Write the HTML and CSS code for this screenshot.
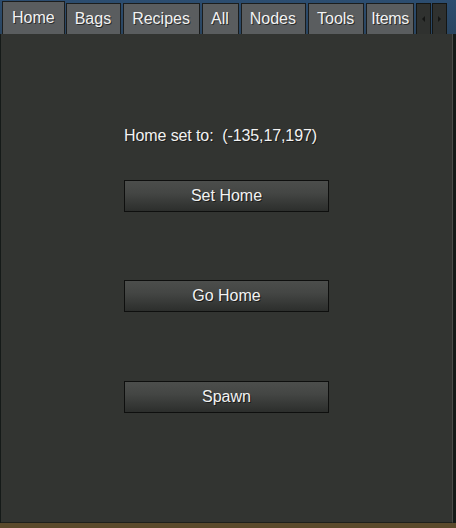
FILE: index.html
```html
<!DOCTYPE html>
<html>
<head>
<meta charset="utf-8">
<link rel="stylesheet" href="styles.css">
</head>
<body>
<div class="scene">
  <div class="tabs">
    <div class="tab active">Home</div>
    <div class="tab">Bags</div>
    <div class="tab">Recipes</div>
    <div class="tab">All</div>
    <div class="tab">Nodes</div>
    <div class="tab">Tools</div>
    <div class="tab last">Items</div>
    <div class="arrow first"><span class="tri left"></span></div>
    <div class="arrow"><span class="tri right"></span></div>
  </div>
  <div class="panel">
    <div class="label">Home set to:&nbsp; (-135,17,197)</div>
    <div class="btn b1">Set Home</div>
    <div class="btn b2">Go Home</div>
    <div class="btn b3">Spawn</div>
  </div>
  <div class="ground"></div>
</div>
</body>
</html>
```
FILE: styles.css
```css
html, body {
  margin: 0;
  padding: 0;
}
body {
  width: 456px;
  height: 528px;
  overflow: hidden;
  background: #1f2b36;
  font-family: "Liberation Sans", Arial, sans-serif;
  color: #f2f2f2;
}
.scene {
  display: flex;
  flex-direction: column;
  height: 528px;
  background: linear-gradient(#2c4d70 0, #2a4560 34px, #151a18 34px, #151a18 100%);
}
.tabs {
  display: flex;
  align-items: flex-end;
  height: 34px;
  padding-left: 2px;
  box-sizing: border-box;
}
.tab {
  height: 31px;
  box-sizing: border-box;
  background: #5a5d5f;
  border: 1px solid #1b1d1d;
  border-bottom: none;
  font-size: 16px;
  line-height: 30px;
  padding: 0 9px 0 8px;
  margin-right: 2px;
  text-shadow: 1px 1px 0 #2a2c2c;
  white-space: nowrap;
}
.tab.active {
  height: 33px;
  line-height: 32px;
  padding: 0 9px 0 9px;
  margin-right: 1px;
}
.tab.last {
  width: 48px;
  padding: 0 0 0 4px;
  letter-spacing: -0.3px;
  overflow: hidden;
}
.arrow {
  width: 15px;
  height: 31px;
  box-sizing: border-box;
  background: #2f312f;
  border: 1px solid #141614;
  border-bottom: none;
  margin-left: 1px;
  display: flex;
  align-items: center;
  justify-content: center;
}
.arrow.first { margin-left: 0; }
.tri {
  width: 0;
  height: 0;
  border-top: 3px solid transparent;
  border-bottom: 3px solid transparent;
}
.tri.left { border-right: 3px solid #151615; }
.tri.right { border-left: 3px solid #151615; }
.panel {
  margin-left: 1px;
  width: 452px;
  height: 489px;
  box-sizing: border-box;
  background: #323431;
  border-right: 1px solid #4a4b48;
  border-bottom: 1px solid #1e201d;
  padding-top: 92px;
  padding-left: 123px;
}
.label {
  font-size: 16px;
  line-height: 20px;
  height: 20px;
  letter-spacing: -0.1px;
  text-shadow: 1px 1px 0 #1a1b1a;
}
.btn {
  width: 205px;
  height: 32px;
  box-sizing: border-box;
  border: 1px solid #0e0f0e;
  background: linear-gradient(#4c4e4c 0%, #444644 40%, #363836 75%, #2c2e2c 100%);
  text-align: center;
  font-size: 16px;
  line-height: 29px;
  text-shadow: 1px 1px 0 #1a1b1a;
}
.b1 { margin-top: 34px; }
.b2 { margin-top: 68px; }
.b3 { margin-top: 69px; }
.ground {
  flex: 1;
  background: #5b4a2c;
}
```
